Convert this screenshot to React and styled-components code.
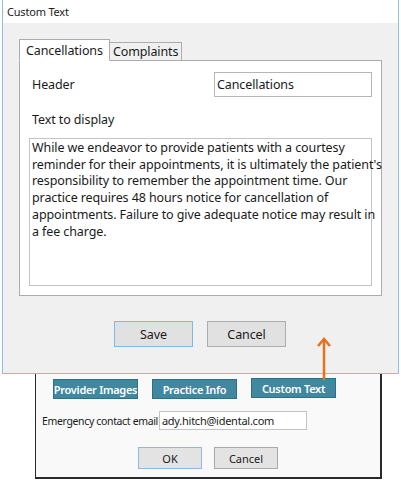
import React from 'react';
import styled, { createGlobalStyle } from 'styled-components';

const GlobalStyle = createGlobalStyle`
  html, body {
    margin: 0;
    padding: 0;
    background: #ffffff;
  }
  body {
    font-family: "Noto Sans", "Liberation Sans", sans-serif;
    color: #1a1a1a;
  }
`;

const Desktop = styled.div`
  position: relative;
  width: 401px;
  height: 482px;
  overflow: hidden;
  background: #ffffff;
`;

// window behind (the settings dialog)
const BackWindow = styled.div`
  position: absolute;
  left: 35px;
  top: 330px;
  width: 347px;
  height: 149px;
  background: #f9f9f9;
  border: 1px solid #2a2a2a;
  border-bottom-width: 2px;
  border-right-width: 2px;
  display: flex;
  flex-direction: column;
  padding: 48px 0 0 0;
  box-sizing: border-box;
`;

const TealRow = styled.div`
  display: flex;
  gap: 14px;
  padding-left: 17px;
`;

const TealButton = styled.div`
  width: 85px;
  height: 20px;
  box-sizing: border-box;
  background: #3f88a0;
  border: 1px solid #2f6f84;
  color: #ffffff;
  font-size: 11px;
  font-weight: 600;
  letter-spacing: -0.3px;
  white-space: nowrap;
  display: flex;
  align-items: center;
  justify-content: center;
  margin-top: ${p => (p.$raised ? '-1px' : '0')};
`;

const EmailRow = styled.div`
  display: flex;
  align-items: center;
  gap: 1px;
  padding-left: 6px;
  margin-top: 12px;
  font-size: 10.5px;
  letter-spacing: -0.35px;
`;

const EmailInput = styled.div`
  width: 148px;
  height: 19px;
  box-sizing: border-box;
  border: 1px solid #c4c4c4;
  background: #ffffff;
  padding-left: 2px;
  display: flex;
  align-items: center;
  font-size: 11px;
  letter-spacing: -0.25px;
`;

const BackButtons = styled.div`
  display: flex;
  gap: 12px;
  padding-left: 102px;
  margin-top: 17px;
`;

const SmallButton = styled.div`
  width: 64px;
  height: 22px;
  box-sizing: border-box;
  background: #e3e3e3;
  border: 1px solid ${p => (p.$primary ? '#8bb8e8' : '#a9a9a9')};
  font-size: 11px;
  display: flex;
  align-items: center;
  justify-content: center;
`;

// front window (Custom Text)
const FrontWindow = styled.div`
  position: absolute;
  left: 2px;
  top: 0;
  width: 397px;
  height: 374px;
  box-sizing: border-box;
  border: 1px solid #8fbdee;
  border-top: none;
  background: #f0f0f0;
  display: flex;
  flex-direction: column;
  letter-spacing: -0.1px;
`;

const TitleBar = styled.div`
  height: 23px;
  background: #ffffff;
  display: flex;
  align-items: center;
  padding-left: 4px;
  font-size: 11px;
  letter-spacing: -0.2px;
  color: #222;
`;

const Body = styled.div`
  padding: 16px 16px 0 16px;
  display: flex;
  flex-direction: column;
`;

const Tabs = styled.div`
  display: flex;
  align-items: flex-end;
  height: 21px;
`;

const Tab = styled.div`
  box-sizing: border-box;
  height: ${p => (p.$active ? '22px' : '19px')};
  padding: 0 ${p => (p.$active ? '6px' : '3px')};
  background: ${p => (p.$active ? '#ffffff' : '#f0f0f0')};
  border: 1px solid #acacac;
  border-bottom: ${p => (p.$active ? '1px solid #ffffff' : '1px solid #acacac')};
  margin-bottom: -1px;
  font-size: 12.5px;
  display: flex;
  align-items: center;
  position: relative;
  z-index: ${p => (p.$active ? 2 : 1)};
  margin-left: ${p => (p.$active ? '0' : '-1px')};
`;

const Panel = styled.div`
  width: 363px;
  height: 236px;
  box-sizing: border-box;
  border: 1px solid #acacac;
  background: #ffffff;
  padding: 11px 9px 8px 9px;
  display: flex;
  flex-direction: column;
`;

const FieldRow = styled.div`
  display: flex;
  align-items: center;
  justify-content: space-between;
`;

const Label = styled.div`
  font-size: 12.5px;
  padding-left: 3px;
  margin-top: ${p => p.$top || '0'};
`;

const TextInput = styled.div`
  width: 158px;
  height: 25px;
  box-sizing: border-box;
  border: 1px solid #b5b5b5;
  padding-left: 2px;
  font-size: 12.5px;
  display: flex;
  align-items: center;
`;

const TextArea = styled.div`
  margin-top: 10px;
  height: 148px;
  box-sizing: border-box;
  border: 1px solid #c4c4c4;
  padding: 1px 2px 0 2px;
  font-size: 12.5px;
  line-height: 16.7px;
  white-space: nowrap;
`;

const ButtonRow = styled.div`
  display: flex;
  gap: 14px;
  padding-left: 95px;
  margin-top: 25px;
`;

const DialogButton = styled.div`
  width: 79px;
  height: 26px;
  box-sizing: border-box;
  background: #e1e1e1;
  border: 1px solid ${p => (p.$primary ? '#86b6e8' : '#adadad')};
  font-size: 12.5px;
  display: flex;
  align-items: center;
  justify-content: center;
`;

const Arrow = styled.svg`
  position: absolute;
  left: 316px;
  top: 336px;
`;

const message = [
  'While we endeavor to provide patients with a courtesy',
  "reminder for their appointments, it is ultimately the patient's",
  'responsibility to remember the appointment time. Our',
  'practice requires 48 hours notice for cancellation of',
  'appointments. Failure to give adequate notice may result in',
  'a fee charge.',
];

const App = () => (
  <Desktop>
    <GlobalStyle />
    <BackWindow>
      <TealRow>
        <TealButton>Provider Images</TealButton>
        <TealButton>Practice Info</TealButton>
        <TealButton $raised>Custom Text</TealButton>
      </TealRow>
      <EmailRow>
        <span>Emergency contact email</span>
        <EmailInput>ady.hitch@idental.com</EmailInput>
      </EmailRow>
      <BackButtons>
        <SmallButton $primary>OK</SmallButton>
        <SmallButton>Cancel</SmallButton>
      </BackButtons>
    </BackWindow>

    <FrontWindow>
      <TitleBar>Custom Text</TitleBar>
      <Body>
        <Tabs>
          <Tab $active>Cancellations</Tab>
          <Tab>Complaints</Tab>
        </Tabs>
        <Panel>
          <FieldRow>
            <Label>Header</Label>
            <TextInput>Cancellations</TextInput>
          </FieldRow>
          <Label $top="14px">Text to display</Label>
          <TextArea>
            {message.map((line, i) => (
              <div key={i}>{line}</div>
            ))}
          </TextArea>
        </Panel>
        <ButtonRow>
          <DialogButton $primary>Save</DialogButton>
          <DialogButton>Cancel</DialogButton>
        </ButtonRow>
      </Body>
    </FrontWindow>

    <Arrow width="16" height="46" viewBox="0 0 16 46">
      <line x1="8" y1="4" x2="8" y2="44" stroke="#e8711c" strokeWidth="2.5" />
      <polyline points="2,10 8,3 14,10" fill="none" stroke="#e8711c" strokeWidth="2.5" />
    </Arrow>
  </Desktop>
);

export default App;
